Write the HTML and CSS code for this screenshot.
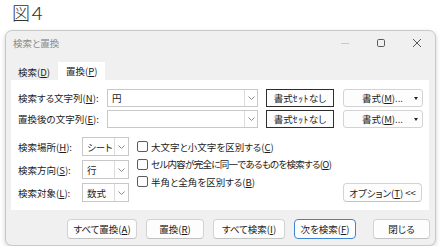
FILE: index.html
```html
<!DOCTYPE html>
<html lang="ja">
<head>
    <meta charset="UTF-8">
    <title>検索と置換</title>
    <link rel="stylesheet" href="styles.css">
</head>
<body>
    <div class="fig-title">図４</div>

    <div class="window">
        <div class="titlebar">
            <span class="win-title">検索と置換</span>
            <div class="controls">
                <span class="ctl">
                    <svg width="10" height="10" viewBox="0 0 10 10"><line x1="1" y1="5.5" x2="9" y2="5.5" stroke="#c8c8c8" stroke-width="1"/></svg>
                </span>
                <span class="ctl">
                    <svg width="10" height="10" viewBox="0 0 10 10"><rect x="1.5" y="1.5" width="7" height="7" rx="1.2" fill="none" stroke="#5a5a5a" stroke-width="1"/></svg>
                </span>
                <span class="ctl">
                    <svg width="10" height="10" viewBox="0 0 10 10"><path d="M1 1 L9 9 M9 1 L1 9" stroke="#5a5a5a" stroke-width="1" fill="none"/></svg>
                </span>
            </div>
        </div>

        <div class="tabs">
            <div class="tab">検索(<u>D</u>)</div>
            <div class="tab active">置換(<u>P</u>)</div>
        </div>

        <div class="panel">
            <div class="find-row">
                <label class="row-label">検索する文字列(<u>N</u>):</label>
                <div class="combo wide">
                    <span class="combo-text">円</span>
                    <span class="combo-btn"><svg width="7" height="4" viewBox="0 0 7 4"><polyline points="0.5,0.5 3.5,3.5 6.5,0.5" fill="none" stroke="#8a8a8a" stroke-width="1"/></svg></span>
                </div>
                <button class="fmt-none">書式<span class="hw">ｾｯﾄ</span>なし</button>
                <button class="fmt">書式(<u>M</u>)...<span class="caret"></span></button>
            </div>
            <div class="find-row">
                <label class="row-label">置換後の文字列(<u>E</u>):</label>
                <div class="combo wide">
                    <span class="combo-text"></span>
                    <span class="combo-btn"><svg width="7" height="4" viewBox="0 0 7 4"><polyline points="0.5,0.5 3.5,3.5 6.5,0.5" fill="none" stroke="#8a8a8a" stroke-width="1"/></svg></span>
                </div>
                <button class="fmt-none">書式<span class="hw">ｾｯﾄ</span>なし</button>
                <button class="fmt">書式(<u>M</u>)...<span class="caret"></span></button>
            </div>

            <div class="options">
                <div class="selects">
                    <div class="sel-row">
                        <label class="sel-label">検索場所(<u>H</u>):</label>
                        <div class="combo small">
                            <span class="combo-text">シート</span>
                            <span class="combo-btn"><svg width="7" height="4" viewBox="0 0 7 4"><polyline points="0.5,0.5 3.5,3.5 6.5,0.5" fill="none" stroke="#8a8a8a" stroke-width="1"/></svg></span>
                        </div>
                    </div>
                    <div class="sel-row">
                        <label class="sel-label">検索方向(<u>S</u>):</label>
                        <div class="combo small">
                            <span class="combo-text">行</span>
                            <span class="combo-btn"><svg width="7" height="4" viewBox="0 0 7 4"><polyline points="0.5,0.5 3.5,3.5 6.5,0.5" fill="none" stroke="#8a8a8a" stroke-width="1"/></svg></span>
                        </div>
                    </div>
                    <div class="sel-row">
                        <label class="sel-label">検索対象(<u>L</u>):</label>
                        <div class="combo small">
                            <span class="combo-text">数式</span>
                            <span class="combo-btn"><svg width="7" height="4" viewBox="0 0 7 4"><polyline points="0.5,0.5 3.5,3.5 6.5,0.5" fill="none" stroke="#8a8a8a" stroke-width="1"/></svg></span>
                        </div>
                    </div>
                </div>

                <div class="checks">
                    <div class="check"><span class="box"></span>大文字と小文字を区別する(<u>C</u>)</div>
                    <div class="check tight"><span class="box"></span>セル内容が完全に同一であるものを検索する(<u>O</u>)</div>
                    <div class="check"><span class="box"></span>半角と全角を区別する(<u>B</u>)</div>
                </div>

                <button class="btn opt-btn">オプション(<u>T</u>) &lt;&lt;</button>
            </div>
        </div>

        <div class="actions">
            <button class="btn w-replace-all">すべて置換(<u>A</u>)</button>
            <button class="btn w-replace">置換(<u>R</u>)</button>
            <button class="btn w-find-all">すべて検索(<u>I</u>)</button>
            <button class="btn btn-primary w-find-next">次を検索(<u>F</u>)</button>
            <button class="btn w-close">閉じる</button>
        </div>
    </div>
</body>
</html>
```

FILE: styles.css
```css
body {
    margin: 0;
    background-color: #fff;
    font-family: "Noto Sans CJK JP", "Noto Sans", sans-serif;
    font-size: 9.5px;
    font-feature-settings: "palt";
    color: #1b1b1b;
}
u {
    text-underline-offset: 1px;
}
.fig-title {
    height: 30px;
    padding-left: 12px;
    font-size: 18px;
    line-height: 25px;
    font-weight: 300;
    font-feature-settings: normal;
    letter-spacing: -2px;
    color: #333;
}
.window {
    margin-left: 5px;
    width: 431px;
    height: 216px;
    box-sizing: border-box;
    border: 1px solid #c9c9c9;
    border-radius: 7px;
    background-color: #f0f0f0;
    box-shadow: 0 2px 5px rgba(0,0,0,0.18);
    display: flex;
    flex-direction: column;
}
.titlebar {
    height: 23px;
    display: flex;
    align-items: center;
    padding-left: 7px;
}
.win-title {
    color: #8a8a8a;
}
.controls {
    margin-left: auto;
    display: flex;
    height: 100%;
}
.ctl {
    width: 36px;
    display: flex;
    align-items: center;
    justify-content: center;
}
.tabs {
    display: flex;
    align-items: flex-end;
    margin: 8px 0 0 5px;
    height: 18px;
}
.tab {
    padding: 0 7px;
    height: 16px;
    line-height: 16px;
}
.tab.active {
    background-color: #fff;
    height: 18px;
    line-height: 18px;
    margin-left: 1px;
    padding: 0 8px;
}
.panel {
    margin: 0 6px 0 5px;
    height: 130px;
    box-sizing: border-box;
    background-color: #fff;
    padding: 9px 6px 0 7px;
}
.find-row {
    display: flex;
    align-items: center;
    height: 18px;
}
.find-row + .find-row {
    margin-top: 3px;
}
.row-label {
    width: 89px;
    white-space: nowrap;
}
.combo {
    display: flex;
    align-items: center;
    box-sizing: border-box;
    border: 1px solid #c8c8c8;
    background-color: #fff;
}
.combo.wide {
    width: 151px;
    height: 18px;
}
.combo.small {
    width: 47px;
    height: 19px;
}
.combo-text {
    padding-left: 4px;
}
.combo-btn {
    margin-left: auto;
    width: 12px;
    height: 100%;
    border-left: 1px solid #dcdcdc;
    display: flex;
    align-items: center;
    justify-content: center;
}
.combo.small .combo-btn {
    width: 13px;
}
button {
    font-family: inherit;
    font-size: 9.5px;
    font-feature-settings: "palt";
    color: #1b1b1b;
    padding: 0;
    cursor: pointer;
    white-space: nowrap;
}
.fmt-none {
    margin-left: 8px;
    width: 68px;
    height: 18px;
    border: 1px solid #2d2d2d;
    background-color: #fdfdfd;
}
.hw {
    letter-spacing: 0.6px;
}
.fmt {
    margin-left: 9px;
    width: 80px;
    height: 18px;
    display: flex;
    align-items: center;
    justify-content: flex-end;
    padding-right: 4px;
    background-color: #fdfdfd;
    border: 1px solid #d3d3d3;
    border-radius: 3px;
}
.caret {
    margin-left: 11px;
    border-left: 2.5px solid transparent;
    border-right: 2.5px solid transparent;
    border-top: 3px solid #222;
}
.options {
    display: flex;
    margin-top: 9px;
}
.selects {
    display: flex;
    flex-direction: column;
    gap: 4px;
}
.sel-row {
    display: flex;
    align-items: center;
    height: 19px;
}
.sel-label {
    width: 64px;
    white-space: nowrap;
}
.checks {
    flex: none;
    margin-left: 8px;
    padding-top: 1px;
    display: flex;
    flex-direction: column;
}
.check {
    display: flex;
    align-items: center;
    height: 17.5px;
    white-space: nowrap;
}
.check.tight {
    letter-spacing: -0.7px;
}
.box {
    flex: none;
    width: 11px;
    height: 11px;
    box-sizing: border-box;
    border: 1px solid #5c5c5c;
    border-radius: 2px;
    margin-right: 3px;
    background-color: #fdfdfd;
}
.btn {
    height: 20px;
    background-color: #fdfdfd;
    border: 1px solid #d3d3d3;
    border-bottom-color: #c2c2c2;
    border-radius: 4px;
}
.opt-btn {
    margin-left: auto;
    margin-right: 1px;
    align-self: flex-end;
    width: 79px;
    height: 19px;
}
.actions {
    display: flex;
    justify-content: flex-end;
    gap: 9px;
    margin-top: 9px;
    padding-right: 5px;
}
.btn-primary {
    border-color: #3d85d2;
}
.w-replace-all {
    width: 70px;
}
.w-replace {
    width: 58px;
}
.w-find-all {
    width: 72px;
}
.w-find-next {
    width: 62px;
}
.w-close {
    width: 57px;
    margin-left: 8px;
}
```
